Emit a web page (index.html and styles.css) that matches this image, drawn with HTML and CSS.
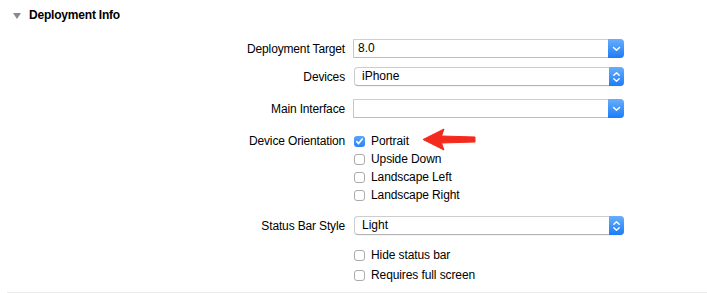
FILE: index.html
```html
<!DOCTYPE html>
<html>
<head>
<meta charset="utf-8">
<link rel="stylesheet" href="styles.css">
</head>
<body>
<div class="section">
  <div class="header">
    <span class="disclosure"></span>
    <span class="title">Deployment Info</span>
  </div>
  <div class="form">
    <div class="row r1">
      <span class="lbl">Deployment Target</span>
      <div class="combo"><span class="val">8.0</span><span class="btn"><svg width="9" height="6" viewBox="0 0 9 6"><path d="M1.5 1.5 L4.5 4.3 L7.5 1.5" fill="none" stroke="#fff" stroke-width="1.5" stroke-linecap="round" stroke-linejoin="round"/></svg></span></div>
    </div>
    <div class="row r2">
      <span class="lbl">Devices</span>
      <div class="popup"><span class="val">iPhone</span><span class="btn"><svg width="9" height="12" viewBox="0 0 9 12"><path d="M1.8 4.3 L4.5 1.8 L7.2 4.3 M1.8 7.7 L4.5 10.2 L7.2 7.7" fill="none" stroke="#fff" stroke-width="1.4" stroke-linecap="round" stroke-linejoin="round"/></svg></span></div>
    </div>
    <div class="row r3">
      <span class="lbl">Main Interface</span>
      <div class="combo"><span class="val"></span><span class="btn"><svg width="9" height="6" viewBox="0 0 9 6"><path d="M1.5 1.5 L4.5 4.3 L7.5 1.5" fill="none" stroke="#fff" stroke-width="1.5" stroke-linecap="round" stroke-linejoin="round"/></svg></span></div>
    </div>
    <div class="group r4">
      <span class="lbl glbl">Device Orientation</span>
      <div class="checks">
        <div class="check"><span class="box on"><svg width="11" height="11" viewBox="0 0 11 11"><path d="M2.8 5.6 L4.6 7.6 L8.2 3" fill="none" stroke="#fff" stroke-width="1.6" stroke-linecap="round" stroke-linejoin="round"/></svg></span><span class="ctext">Portrait</span></div>
        <div class="check"><span class="box"></span><span class="ctext">Upside Down</span></div>
        <div class="check"><span class="box"></span><span class="ctext">Landscape Left</span></div>
        <div class="check"><span class="box"></span><span class="ctext">Landscape Right</span></div>
      </div>
    </div>
    <div class="row r5">
      <span class="lbl">Status Bar Style</span>
      <div class="popup"><span class="val">Light</span><span class="btn"><svg width="9" height="12" viewBox="0 0 9 12"><path d="M1.8 4.3 L4.5 1.8 L7.2 4.3 M1.8 7.7 L4.5 10.2 L7.2 7.7" fill="none" stroke="#fff" stroke-width="1.4" stroke-linecap="round" stroke-linejoin="round"/></svg></span></div>
    </div>
    <div class="group r6">
      <span class="lbl"></span>
      <div class="checks checks2">
        <div class="check"><span class="box"></span><span class="ctext">Hide status bar</span></div>
        <div class="check"><span class="box"></span><span class="ctext">Requires full screen</span></div>
      </div>
    </div>
  </div>
  <svg class="arrow" width="56" height="24" viewBox="0 0 56 24"><path d="M1 11.5 L22 1 L19.5 8 L53 9 L53 14 L19.5 15 L22 22 Z" fill="#f42a1e" stroke="#f42a1e" stroke-width="1" stroke-linejoin="round"/></svg>
</div>
</body>
</html>
```

FILE: styles.css
```css
html, body {
  margin: 0;
  padding: 0;
  background: #fff;
}
body {
  width: 707px;
  height: 293px;
  overflow: hidden;
  font-family: "Liberation Sans", Arial, sans-serif;
  font-size: 12px;
  color: #000;
}
.section {
  position: relative;
  height: 292px;
  border-bottom: 1px solid #ededed;
  margin-left: 7px;
}
.header {
  height: 30px;
  display: flex;
  align-items: center;
  padding-left: 6px;
}
.disclosure {
  width: 0;
  height: 0;
  border-left: 4px solid transparent;
  border-right: 4px solid transparent;
  border-top: 6px solid #8a8a8a;
  margin-right: 8px;
  margin-top: 1px;
}
.title {
  font-weight: bold;
  font-size: 12px;
  color: #000;
  letter-spacing: -0.2px;
}
.form {
  display: flex;
  flex-direction: column;
}
.row, .group {
  display: flex;
  gap: 8px;
}
.row {
  height: 19px;
  align-items: center;
}
.lbl {
  width: 338px;
  flex: none;
  text-align: right;
  white-space: nowrap;
  letter-spacing: -0.15px;
}
.r1 { margin-top: 9px; }
.r2 { margin-top: 9px; }
.r3 { margin-top: 13px; }
.r4 { margin-top: 14px; }
.r5 { margin-top: 12px; }
.r6 { margin-top: 10px; }
.glbl {
  line-height: 18px;
}
.combo, .popup {
  height: 19px;
  box-sizing: border-box;
  display: flex;
  align-items: stretch;
  background: #fff;
}
.combo {
  width: 271px;
  border: 1px solid #c6c6c6;
  border-right: none;
  border-top-color: #cfcfcf;
  border-bottom-color: #bdbdbd;
  border-radius: 0 4px 4px 0;
}
.combo .val {
  flex: 1;
  padding-left: 4px;
  line-height: 17px;
}
.combo .btn {
  width: 16px;
  margin: -1px 0;
  border-radius: 0 4px 4px 0;
}
.popup {
  width: 270px;
  margin-left: 1px;
  border: 1px solid #cdcdcd;
  border-bottom-color: #b3b3b3;
  border-radius: 4px;
  box-shadow: 0 0.5px 0.5px rgba(0,0,0,0.08);
}
.popup .val {
  flex: 1;
  padding-left: 7px;
  line-height: 17px;
}
.popup .btn {
  width: 15px;
  margin: -1px -1px -1px 0;
  border-radius: 0 4px 4px 0;
}
.btn {
  display: flex;
  align-items: center;
  justify-content: center;
  background: linear-gradient(#68aefb, #1b7cf8);
}
.checks {
  display: flex;
  flex-direction: column;
}
.check {
  height: 18px;
  display: flex;
  align-items: center;
}
.checks2 .check {
  height: 20px;
}
.box {
  width: 11px;
  height: 11px;
  box-sizing: border-box;
  border: 1px solid #ababab;
  border-radius: 3px;
  background: #fff;
  margin-left: 1px;
  margin-right: 6px;
  display: flex;
}
.box.on {
  border: none;
  background: linear-gradient(#5aa5fb, #2a83f7);
}
.ctext {
  letter-spacing: -0.1px;
}
.arrow {
  position: absolute;
  left: 415px;
  top: 128px;
}
```
